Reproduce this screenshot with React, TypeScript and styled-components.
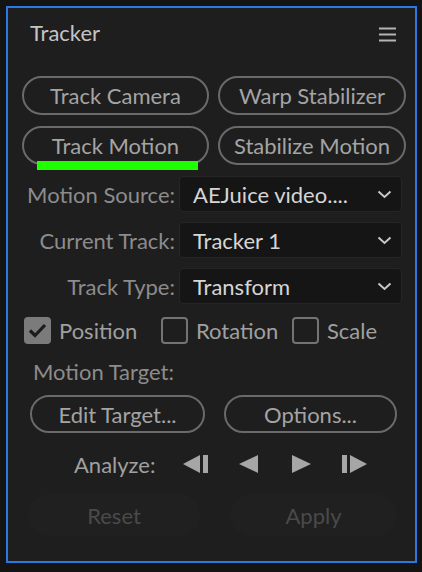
import React from "react";
import styled, { createGlobalStyle } from "styled-components";

const Global = createGlobalStyle`
  html, body { margin: 0; padding: 0; background: #141414; }
  body { font-family: Lato, "Open Sans", sans-serif; }
`;

const Panel = styled.div`
  box-sizing: border-box;
  margin: 6px 0 0 6px;
  width: 411px;
  height: 557px;
  border: 2px solid #2b78e4;
  background: #1e1e1e;
  display: flex;
  flex-direction: column;
  font-size: 23px;
  color: #8e8e8e;
`;

const Header = styled.div`
  height: 52px;
  display: flex;
  align-items: center;
  justify-content: space-between;
  padding: 0 19px 0 22px;
`;

const Title = styled.div`
  color: #c4c4c4;
  font-size: 22px;
  margin-bottom: 3px;
`;

const ButtonGrid = styled.div<{ $cols: string; $left: number; $colGap: number; $top: number }>`
  display: grid;
  grid-template-columns: ${(p) => p.$cols};
  column-gap: ${(p) => p.$colGap}px;
  row-gap: 11px;
  padding-left: ${(p) => p.$left}px;
  margin-top: ${(p) => p.$top}px;
`;

const PillButton = styled.div<{ $h: number }>`
  position: relative;
  box-sizing: border-box;
  height: ${(p) => p.$h}px;
  border: 2px solid #6a6a6a;
  border-radius: 20px;
  display: flex;
  align-items: center;
  justify-content: center;
  color: #a4a4a4;
  font-size: 22px;
`;

const GreenMark = styled.div`
  position: absolute;
  left: 13px;
  top: 33px;
  width: 161px;
  height: 9px;
  background: #1eff00;
  z-index: 2;
`;

const FieldList = styled.div`
  display: flex;
  flex-direction: column;
  gap: 10px;
  margin-top: 11px;
`;

const FieldRow = styled.div`
  display: flex;
  align-items: center;
  height: 36px;
`;

const FieldLabel = styled.div`
  width: 167px;
  text-align: right;
  margin-right: 4px;
  color: #8c8c8c;
  font-size: 22px;
`;

const Select = styled.div`
  box-sizing: border-box;
  width: 223px;
  height: 36px;
  background: #151515;
  border: 1px solid #262626;
  border-radius: 4px;
  display: flex;
  align-items: center;
  justify-content: space-between;
  padding: 0 9px 0 13px;
  color: #d6d6d6;
  font-size: 22px;
`;

const CheckRow = styled.div`
  display: grid;
  grid-template-columns: 137px 131px auto;
  margin-top: 12px;
  padding-left: 16px;
  height: 28px;
`;

const CheckItem = styled.div`
  display: flex;
  align-items: center;
  gap: 8px;
  color: #a0a0a0;
  font-size: 22px;
`;

const Box = styled.div<{ $checked: boolean }>`
  box-sizing: border-box;
  width: 27px;
  height: 27px;
  border-radius: 4px;
  border: 2px solid ${(p) => (p.$checked ? "#7b7b7b" : "#737373")};
  background: ${(p) => (p.$checked ? "#7b7b7b" : "transparent")};
  display: flex;
  align-items: center;
  justify-content: center;
`;

const SectionLabel = styled.div`
  height: 38px;
  display: flex;
  align-items: center;
  padding-left: 25px;
  margin-top: 8px;
  color: #8c8c8c;
  font-size: 22px;
`;

const AnalyzeRow = styled.div`
  display: flex;
  align-items: center;
  height: 20px;
  margin-top: 21px;
  padding-left: 66px;
`;

const AnalyzeLabel = styled.div`
  width: 109px;
  color: #a0a0a0;
  font-size: 22px;
`;

const IconSlot = styled.div<{ $w: number }>`
  width: ${(p) => p.$w}px;
  display: flex;
  align-items: center;
`;

const FooterGrid = styled.div`
  display: grid;
  grid-template-columns: 172px 167px;
  column-gap: 30px;
  padding-left: 20px;
  margin-top: 20px;
`;

const GhostButton = styled.div`
  height: 42px;
  border-radius: 21px;
  background: #202020;
  display: flex;
  align-items: center;
  justify-content: center;
  color: #4a4a4a;
  font-size: 22px;
`;

const Chevron = () => (
  <svg width="15" height="9" viewBox="0 0 15 9">
    <polyline points="1.5,1.5 7.5,7 13.5,1.5" fill="none" stroke="#c8c8c8" strokeWidth="2" />
  </svg>
);

const Hamburger = () => (
  <svg width="17" height="15" viewBox="0 0 17 15">
    <rect x="0" y="0.5" width="17" height="2" fill="#b4b4b4" />
    <rect x="0" y="6.5" width="17" height="2" fill="#b4b4b4" />
    <rect x="0" y="12.5" width="17" height="2" fill="#b4b4b4" />
  </svg>
);

const Check = () => (
  <svg width="19" height="15" viewBox="0 0 19 15">
    <polyline points="2,7.5 7,12.5 17,2" fill="none" stroke="#1c1c1c" strokeWidth="3.2" />
  </svg>
);

const ICON = "#a6a6a6";
const StepBack = () => (
  <svg width="26" height="18" viewBox="0 0 26 18">
    <polygon points="17,0 17,18 0,9" fill={ICON} />
    <rect x="20" y="0" width="5" height="18" fill={ICON} />
  </svg>
);
const PlayBack = () => (
  <svg width="19" height="18" viewBox="0 0 19 18">
    <polygon points="19,0 19,18 0,9" fill={ICON} />
  </svg>
);
const PlayFwd = () => (
  <svg width="19" height="18" viewBox="0 0 19 18">
    <polygon points="0,0 0,18 19,9" fill={ICON} />
  </svg>
);
const StepFwd = () => (
  <svg width="26" height="18" viewBox="0 0 26 18">
    <rect x="0" y="0" width="5" height="18" fill={ICON} />
    <polygon points="8,0 8,18 25,9" fill={ICON} />
  </svg>
);

const fields = [
  { label: "Motion Source:", value: "AEJuice video...." },
  { label: "Current Track:", value: "Tracker 1" },
  { label: "Track Type:", value: "Transform" },
];

const checks = [
  { label: "Position", checked: true },
  { label: "Rotation", checked: false },
  { label: "Scale", checked: false },
];

export default function App() {
  return (
    <>
      <Global />
      <Panel>
        <Header>
          <Title>Tracker</Title>
          <Hamburger />
        </Header>
        <ButtonGrid $cols="187px 188px" $left={14} $colGap={9} $top={16}>
          <PillButton $h={39}>Track Camera</PillButton>
          <PillButton $h={39}>Warp Stabilizer</PillButton>
          <PillButton $h={39}>
            Track Motion
            <GreenMark />
          </PillButton>
          <PillButton $h={39}>Stabilize Motion</PillButton>
        </ButtonGrid>
        <FieldList>
          {fields.map((f) => (
            <FieldRow key={f.label}>
              <FieldLabel>{f.label}</FieldLabel>
              <Select>
                <span>{f.value}</span>
                <Chevron />
              </Select>
            </FieldRow>
          ))}
        </FieldList>
        <CheckRow>
          {checks.map((c) => (
            <CheckItem key={c.label}>
              <Box $checked={c.checked}>{c.checked && <Check />}</Box>
              {c.label}
            </CheckItem>
          ))}
        </CheckRow>
        <SectionLabel>Motion Target:</SectionLabel>
        <ButtonGrid $cols="175px 173px" $left={22} $colGap={19} $top={5}>
          <PillButton $h={38}>Edit Target...</PillButton>
          <PillButton $h={38}>Options...</PillButton>
        </ButtonGrid>
        <AnalyzeRow>
          <AnalyzeLabel>Analyze:</AnalyzeLabel>
          <IconSlot $w={56}><StepBack /></IconSlot>
          <IconSlot $w={53}><PlayBack /></IconSlot>
          <IconSlot $w={50}><PlayFwd /></IconSlot>
          <IconSlot $w={30}><StepFwd /></IconSlot>
        </AnalyzeRow>
        <FooterGrid>
          <GhostButton>Reset</GhostButton>
          <GhostButton>Apply</GhostButton>
        </FooterGrid>
      </Panel>
    </>
  );
}
